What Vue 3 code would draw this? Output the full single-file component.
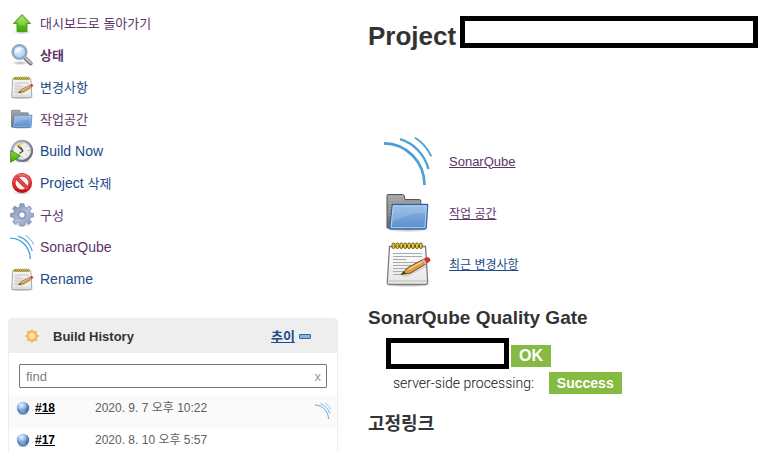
<script setup>
import { ref } from 'vue'

const query = ref('')

const tasks = [
  { icon: 'up', ko: '대시보드로 돌아가기', visited: true },
  { icon: 'search', ko: '상태', visited: true, current: true },
  { icon: 'notepad', ko: '변경사항' },
  { icon: 'folder', ko: '작업공간', visited: true },
  { icon: 'clock', text: 'Build Now' },
  { icon: 'delete', text: 'Project ', ko: '삭제' },
  { icon: 'gear', ko: '구성', visited: true },
  { icon: 'sonar', text: 'SonarQube', visited: true },
  { icon: 'notepad', text: 'Rename' }
]

const builds = [
  { id: '#18', date: '2020. 9. 7 오후 10:22', sonar: true },
  { id: '#17', date: '2020. 8. 10 오후 5:57', sonar: false }
]

const links = [
  { icon: 'sonar', text: 'SonarQube', visited: true },
  { icon: 'folder', ko: '작업 공간', visited: true },
  { icon: 'notepad', ko: '최근 변경사항' }
]
</script>

<template>
  <svg class="sprite" aria-hidden="true">
    <defs>
      <linearGradient id="g-green" x1="0" y1="0" x2="0" y2="1">
        <stop offset="0" stop-color="#8ee03a" /><stop offset="1" stop-color="#3fa50c" />
      </linearGradient>
      <linearGradient id="g-folder" x1="0" y1="0" x2="0" y2="1">
        <stop offset="0" stop-color="#8fb8e2" /><stop offset="1" stop-color="#5a8ecb" />
      </linearGradient>
      <linearGradient id="g-back" x1="0" y1="0" x2="0" y2="1">
        <stop offset="0" stop-color="#a3a3a3" /><stop offset="1" stop-color="#6d6d6d" />
      </linearGradient>
      <linearGradient id="g-paper" x1="0" y1="0" x2="0" y2="1">
        <stop offset="0" stop-color="#fefefe" /><stop offset="1" stop-color="#e6e6e6" />
      </linearGradient>
      <linearGradient id="g-gear" x1="0" y1="0" x2="1" y2="1">
        <stop offset="0" stop-color="#7389b2" /><stop offset=".55" stop-color="#b3bddb" /><stop offset="1" stop-color="#8594b8" />
      </linearGradient>
      <linearGradient id="g-red" x1="0" y1="0" x2="0" y2="1">
        <stop offset="0" stop-color="#f2696c" /><stop offset="1" stop-color="#cf0b10" />
      </linearGradient>
      <linearGradient id="g-rim" x1="0" y1="0" x2="1" y2="1">
        <stop offset="0" stop-color="#b9b9cc" /><stop offset="1" stop-color="#5e5e75" />
      </linearGradient>
      <radialGradient id="g-ball" cx=".38" cy=".27" r=".72">
        <stop offset="0" stop-color="#e9f1fa" /><stop offset=".4" stop-color="#a3bfe5" /><stop offset=".75" stop-color="#517bbb" /><stop offset="1" stop-color="#34599a" />
      </radialGradient>
      <radialGradient id="g-lens" cx=".4" cy=".35" r=".7">
        <stop offset="0" stop-color="#e9f3fd" /><stop offset="1" stop-color="#9fc5ef" />
      </radialGradient>
      <radialGradient id="g-sun">
        <stop offset="0" stop-color="#fffbd0" /><stop offset=".6" stop-color="#ffe477" /><stop offset="1" stop-color="#fcc348" />
      </radialGradient>
      <radialGradient id="g-shadow">
        <stop offset="0" stop-color="#000" stop-opacity=".3" /><stop offset="1" stop-color="#000" stop-opacity="0" />
      </radialGradient>
    </defs>

    <symbol id="i-up" viewBox="0 0 24 24">
      <ellipse cx="12" cy="21" rx="9" ry="2.500" fill="url(#g-shadow)" />
      <path d="M12 3.500 20.600 12.500H17V20.500H7V12.500H3.400Z" fill="url(#g-green)" stroke="#4a9f25" stroke-linejoin="round" />
      <path d="M12 5 18 11.500H15.500V14H8.500V11.500H6Z" fill="#fff" opacity=".22" />
    </symbol>

    <symbol id="i-search" viewBox="0 0 24 24">
      <ellipse cx="10" cy="20" rx="9" ry="2.200" fill="url(#g-shadow)" />
      <path d="M14.500 14.500 20.800 20.500" stroke="#77777a" stroke-width="3.800" stroke-linecap="round" />
      <path d="M15 14.500 21 20" stroke="#d8d8da" stroke-width="1.600" stroke-linecap="round" />
      <circle cx="9.500" cy="9" r="7.400" fill="url(#g-lens)" stroke="#a3a5aa" stroke-width="1.400" />
      <circle cx="9.500" cy="9" r="6.200" fill="none" stroke="#6a9dda" stroke-width="1" />
      <path d="M4.800 9.400C5 5.600 8.500 4 12.500 5.200 10.500 7.800 8 9 4.800 9.400Z" fill="#fff" opacity=".75" />
    </symbol>

    <symbol id="i-notepad" viewBox="0 0 48 48">
      <g transform="translate(0 3)">
        <ellipse cx="24" cy="42.500" rx="23" ry="3" fill="url(#g-shadow)" />
        <path d="M5.500 4.500H41.500L43.700 40Q43.700 42.500 41.500 42.500H5.500Q3 42.500 3.300 40Z" fill="url(#g-paper)" stroke="#7d7d7d" stroke-width="1.300" />
        <path d="M4.500 39H43" stroke="#bbb" />
        <path d="M9 11.500H38M9 14.500H38M9 17.500H22M9 20.500H33M9 23.500H29M9 26.500H24M9 29.500H20M9 32.500H18" stroke="#aaa" stroke-width="1" />
        <g fill="#ecd23a" stroke="#6b5a08" stroke-width="1">
          <rect v-for="n in 8" :key="n" :x="4.200 + n * 3.900" y="1" width="2.800" height="5.500" rx="1.400" />
        </g>
        <path d="M17 34 40 22 43 25 23 35Z" fill="#000" opacity=".1" />
        <path d="M17 32.500 23.500 25.800 39.500 17.200 42.300 21.600 26.500 31Z" fill="#dda045" stroke="#7a4a12" stroke-width="1" stroke-linejoin="round" />
        <path d="M24.500 27.300 40 18.600" stroke="#f6d28b" stroke-width="1.300" />
        <path d="M17 32.500 20.200 29.200 22 31.500Z" fill="#4b3614" />
        <path d="M38 18 40.800 22.500 43 21.200 40.200 16.800Z" fill="#c2c2c2" stroke="#888" stroke-width=".5" />
        <path d="M40.200 16.800 42.500 15.500Q46 15 46.300 18.500L43 21.200Z" fill="#e3262a" stroke="#c44" stroke-width=".7" />
      </g>
    </symbol>

    <symbol id="i-folder" viewBox="0 0 48 48">
      <ellipse cx="24" cy="41" rx="23" ry="3.500" fill="url(#g-shadow)" />
      <path d="M3 40V7.500Q3 6.500 4 6.500H18.500Q20 6.500 20.300 8L21 11.500H35.500Q36.800 11.500 36.800 13V40Z" fill="url(#g-back)" stroke="#565656" />
      <path d="M4 9H19M4 12H20M4 15H36M4 18H9M4 21H9M4 24H9M4 27H8" stroke="#c8c8c8" stroke-width=".7" opacity=".7" />
      <path d="M8.300 16.500H43.700L42.200 39.500Q42 41 40.700 41H6.500Q5.500 41 5.700 39.500Z" fill="url(#g-folder)" stroke="#2e63a6" stroke-width="1.300" stroke-linejoin="round" />
      <path d="M9.300 17.800H42.300L41 39.700H7Z" fill="none" stroke="#bcd6f1" stroke-width=".9" />
      <path d="M9.500 18H42.300L42 25C30 25 17 28 8 35Z" fill="#fff" opacity=".14" />
    </symbol>

    <symbol id="i-clock" viewBox="0 0 24 24">
      <ellipse cx="13" cy="22.300" rx="10" ry="1.700" fill="url(#g-shadow)" />
      <circle cx="12" cy="11.800" r="10" fill="#f1f1ec" stroke="url(#g-rim)" stroke-width="2.200" />
      <circle cx="12" cy="11.800" r="8.500" fill="none" stroke="#c5c5cb" stroke-width=".8" />
      <path d="M11.500 11 6 6.500 10.500 3.500Z" fill="#e5ca66" />
      <path d="M8 7 13 12 9.500 14.500M13 12 11 8.500" fill="none" stroke="#444" stroke-width="1.100" />
      <path d="M12 4V5.500M12 17.500V19M18 11.500H19.500M16.800 6.700 16 7.500M16.800 16.300 16 15.500" stroke="#999" />
      <path d="M.7 11.500 10.500 17 .7 23.300Z" fill="url(#g-green)" stroke="#348b13" stroke-width=".9" stroke-linejoin="round" />
    </symbol>

    <symbol id="i-delete" viewBox="0 0 24 24">
      <ellipse cx="12" cy="21.800" rx="9" ry="2" fill="url(#g-shadow)" />
      <circle cx="12" cy="12" r="8.300" fill="#f7f4f4" stroke="#c4262a" stroke-width="3.600" />
      <circle cx="12" cy="12" r="8.300" fill="none" stroke="url(#g-red)" stroke-width="2.600" />
      <path d="M6.300 6.300 17.700 17.700" stroke="#c4262a" stroke-width="4" />
      <path d="M6 6 18 18" stroke="#e0474a" stroke-width="2.800" />
    </symbol>

    <symbol id="i-gear" viewBox="0 0 24 24">
      <ellipse cx="12" cy="21.500" rx="9" ry="2.300" fill="url(#g-shadow)" />
      <path d="M10 .8H14L14.500 4 16.600 4.900 19.300 3 21.600 5.600 19.600 8.100 20.400 10.100 23.500 10.500V13.800L20.400 14.300 19.500 16.500 21.400 19 19 21.400 16.400 19.500 14.400 20.300 14 23H10.200L9.700 20.200 7.600 19.400 5 21.300 2.700 19 4.500 16.400 3.600 14.300.6 13.800V10.500L3.700 10 4.500 8 2.600 5.500 5 3.100 7.600 4.900 9.600 4Z" fill="url(#g-gear)" stroke="#7987a8" stroke-width=".8" stroke-linejoin="round" />
      <circle cx="12" cy="12" r="4.500" fill="#8f9cc2" opacity=".8" />
      <circle cx="12" cy="12" r="3.200" fill="#fff" stroke="#66769c" stroke-width=".8" />
    </symbol>

    <symbol id="i-sonar" viewBox="0 0 48 48">
      <g fill="none" stroke="#4b9fd5">
        <path d="M0 6.300C22.500 6.300 40.500 25 40.500 48" stroke-width="2.700" />
        <path d="M16 2.200C30 6.500 40.500 17.500 44.500 32" stroke-width="2.300" />
        <path d="M31 .8C38 5 43.500 11.500 47.300 19.300" stroke-width="1.800" />
      </g>
    </symbol>

    <symbol id="i-sun" viewBox="0 0 16 16">
      <path d="M8 .7 9.300 3.600 12.900 2.700 12.300 6 15.500 8 12.400 9.800 13.100 13.100 9.600 12.400 8 15.500 6.300 12.400 2.900 13.100 3.700 9.800.6 8 3.700 6.200 2.900 2.800 6.500 3.600Z" fill="#f8b54b" />
      <circle cx="8" cy="8" r="4.500" fill="url(#g-sun)" stroke="#f0a03c" stroke-width=".8" />
    </symbol>

    <symbol id="i-ball" viewBox="0 0 16 16">
      <ellipse cx="8" cy="14" rx="6.500" ry="1.600" fill="url(#g-shadow)" />
      <circle cx="8" cy="8" r="6.200" fill="url(#g-ball)" />
      <ellipse cx="8" cy="11.800" rx="3" ry="1.600" fill="#9dc4ef" opacity=".5" />
    </symbol>
  </svg>

  <div class="page">
    <aside class="side">
      <nav class="tasks">
        <a v-for="(t, i) in tasks" :key="i" href="#" class="task" :class="{ visited: t.visited, current: t.current }">
          <svg class="icon-md" aria-hidden="true"><use :href="'#i-' + t.icon" /></svg>
          <span class="label">{{ t.text }}<span v-if="t.ko" class="ko">{{ t.ko }}</span></span>
        </a>
      </nav>

      <section class="history">
        <header class="history-head">
          <svg class="icon-sm" aria-hidden="true"><use href="#i-sun" /></svg>
          <h3>Build History</h3>
          <a href="#" class="trend">추이</a>
          <button type="button" class="collapse" aria-label="Collapse"></button>
        </header>
        <div class="search">
          <input v-model="query" type="text" placeholder="find" aria-label="find" />
          <button type="button" class="clear" @click="query = ''">x</button>
        </div>
        <table class="builds">
          <tbody>
            <tr v-for="b in builds" :key="b.id">
              <td class="num">
                <div class="build">
                  <svg class="icon-sm" aria-hidden="true"><use href="#i-ball" /></svg>
                  <a href="#">{{ b.id }}</a>
                </div>
              </td>
              <td class="date">{{ b.date }}</td>
              <td class="badge">
                <svg v-if="b.sonar" class="icon-sm" aria-hidden="true"><use href="#i-sonar" /></svg>
              </td>
            </tr>
          </tbody>
        </table>
      </section>
    </aside>

    <main class="main">
      <div class="title">
        <h1>Project</h1>
        <div class="masked"></div>
      </div>

      <ul class="links">
        <li v-for="l in links" :key="l.icon">
          <svg class="icon-lg" aria-hidden="true"><use :href="'#i-' + l.icon" /></svg>
          <a href="#" :class="{ visited: l.visited, small: l.ko }">{{ l.text || l.ko }}</a>
        </li>
      </ul>

      <h2>SonarQube Quality Gate</h2>
      <div class="gate">
        <div class="masked gate-name"></div>
        <span class="status ok">OK</span>
      </div>
      <div class="processing">
        <span class="light">server-side processing:</span>
        <span class="status">Success</span>
      </div>

      <h2 class="permalinks">고정링크</h2>
    </main>
  </div>
</template>

<style>
html {
  scrollbar-width: none;
}
body {
  margin: 0;
  background: #fff;
}
</style>

<style scoped>
.sprite {
  position: absolute;
  width: 0;
  height: 0;
}
.page {
  display: grid;
  grid-template-columns: 330px 1fr;
  gap: 30px;
  padding: 7px 12px 0 8px;
  font-family: "Liberation Sans", "Noto Sans CJK KR", sans-serif;
  font-size: 14px;
  color: #333;
}
h1, h2, h3, ul {
  margin: 0;
  padding: 0;
}
a {
  color: #204a87;
}
a.visited {
  color: #5c3566;
}
button {
  padding: 0;
  border: 0;
  background: none;
  font: inherit;
}
.icon-sm, .icon-md, .icon-lg {
  display: block;
  flex: none;
}
.icon-sm {
  width: 16px;
  height: 16px;
}
.icon-md {
  width: 24px;
  height: 24px;
}
.icon-lg {
  width: 48px;
  height: 48px;
}
.task {
  display: flex;
  align-items: center;
  gap: 6px;
  height: 32px;
  padding-left: 2px;
  text-decoration: none;
}
.label {
  line-height: 20px;
  white-space: pre;
}
.ko {
  font-size: 13px;
}
.current {
  font-weight: bold;
}
.history {
  margin-top: 23px;
  border: 1px solid #eee;
  border-bottom: 0;
  border-radius: 4px 4px 0 0;
}
.history-head {
  display: flex;
  align-items: center;
  height: 34px;
  padding: 0 26px 0 15px;
  background: #eee;
  font-size: 13px;
}
.history-head h3 {
  flex: 1;
  margin-left: 13px;
  font-size: 13px;
}
.trend {
  padding-bottom: 2px;
  font-weight: bold;
}
.collapse {
  width: 12px;
  height: 5px;
  margin-left: 4px;
  border: 1px solid #3465a4;
  border-radius: 1px;
  background: #89b3dd;
}
.search {
  display: flex;
  margin: 11px 10px 8px;
  border: 1px solid #767676;
  border-radius: 1px;
  font-size: 13px;
}
.search input {
  flex: 1;
  min-width: 0;
  height: 22px;
  box-sizing: border-box;
  padding: 0 6px;
  border: 0;
  outline: 0;
  background: none;
  font: inherit;
}
.search input::placeholder {
  color: #808080;
}
.clear {
  padding: 0 5px;
  color: #999;
}
.builds {
  width: 100%;
  border-collapse: collapse;
  font-size: 12px;
}
.builds tr {
  height: 32px;
}
.builds tr:nth-child(odd) {
  background: #fafafa;
}
.builds td {
  padding: 4px 0 0;
  vertical-align: top;
  line-height: 16px;
}
.builds .num {
  width: 86px;
}
.builds .date {
  color: #606060;
}
.builds .badge {
  width: 22px;
  padding-top: 7px;
}
.build {
  display: flex;
  align-items: center;
  gap: 4px;
  padding-left: 6px;
}
.build a {
  color: #000;
  font-weight: bold;
}
.title {
  display: flex;
  align-items: flex-start;
  gap: 4px;
  padding-top: 9px;
}
h1 {
  padding-top: 4px;
  font-size: 26px;
  line-height: 32px;
}
.masked {
  flex: 1;
  height: 22px;
  margin-bottom: 8px;
  border: 5px solid #000;
}
.links {
  display: flex;
  flex-direction: column;
  gap: 3px;
  margin-top: 81px;
  padding-left: 16px;
  list-style: none;
}
.links li {
  display: flex;
  align-items: center;
  gap: 17px;
  font-size: 13px;
}
.links .small {
  font-size: 12px;
}
h2 {
  margin-top: 19px;
  font-size: 19px;
  line-height: 24px;
}
.gate {
  display: flex;
  align-items: center;
  gap: 2px;
  margin-top: 8px;
  padding-left: 18px;
}
.gate-name {
  flex: 0 0 113px;
  height: 21px;
  margin: 0;
}
.status {
  padding: 0 8px;
  background: #85bb43;
  color: #fff;
  font-weight: bold;
  line-height: 22px;
}
.ok {
  margin-top: 4px;
  font-size: 16px;
}
.processing {
  display: flex;
  align-items: center;
  gap: 15px;
  margin-top: 3px;
  padding-left: 25px;
}
.light {
  font-family: Roboto, "Liberation Sans", sans-serif;
  font-weight: 300;
  color: #111;
}
h2.permalinks {
  margin-top: 18px;
  font-size: 18px;
}
</style>
